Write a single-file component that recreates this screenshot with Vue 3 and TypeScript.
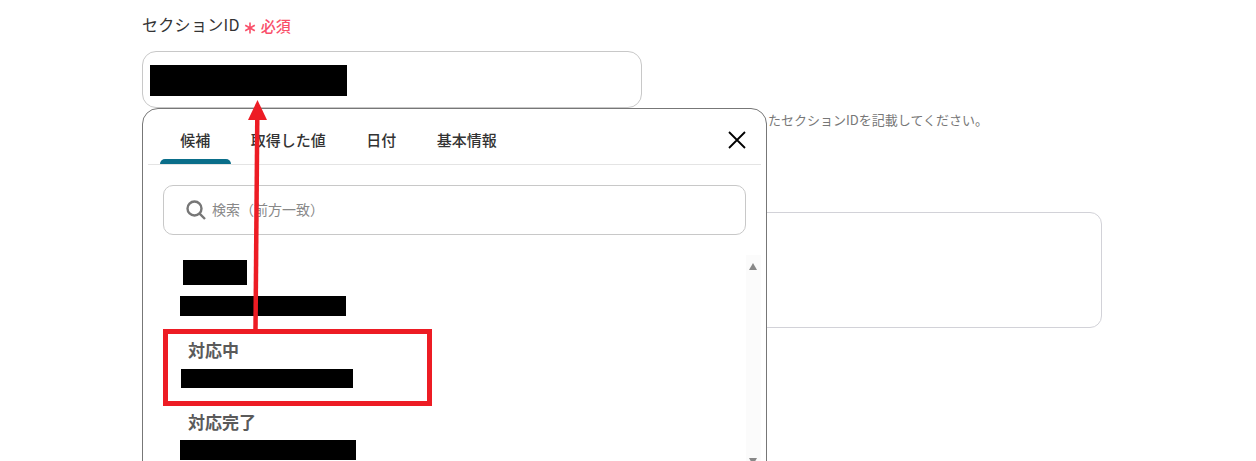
<script setup lang="ts">
const tabs = ['候補', '取得した値', '日付', '基本情報']

const items = [
  { name: '', nameWidth: 64, valueWidth: 166, valueLeft: 0, valueTop: 0, valueHeight: 20 },
  { name: '対応中', nameWidth: 0, valueWidth: 172, valueLeft: 1, valueTop: 1, valueHeight: 19 },
  { name: '対応完了', nameWidth: 0, valueWidth: 176, valueLeft: 0, valueTop: 0, valueHeight: 20 },
]
</script>

<template>
  <div class="page">
    <div class="form">
      <div class="field-label">
        <span class="field-name">セクションID</span>
        <svg class="asterisk" width="12" height="12" viewBox="0 0 12 12">
          <path d="M6 0.5V11.5M1.2 3.2L10.8 8.8M10.8 3.2L1.2 8.8" />
        </svg>
        <span class="required">必須</span>
      </div>
      <div class="input">
        <div class="redact redact--input"></div>
      </div>
      <p class="help">URLから取得したセクションIDを記載してください。</p>
      <div class="textarea"></div>
    </div>

    <div class="popup">
      <div class="tabs">
        <button
          v-for="(tab, index) in tabs"
          :key="tab"
          class="tab"
          :class="{ 'tab--active': index === 0 }"
          type="button"
        >
          {{ tab }}
        </button>
        <svg class="close" width="18" height="18" viewBox="0 0 18 18">
          <path d="M1 1L17 17M17 1L1 17" />
        </svg>
      </div>

      <div class="search">
        <svg class="search-icon" width="20" height="20" viewBox="0 0 20 20">
          <circle cx="8.5" cy="8.5" r="7" />
          <path d="M13.6 13.6L19 19" />
        </svg>
        <span class="search-text">検索（前方一致）</span>
      </div>

      <div class="list-wrap">
        <ul class="list">
          <li v-for="item in items" :key="item.valueWidth" class="item">
            <div class="item-name">
              <div v-if="item.nameWidth" class="redact redact--name" :style="{ width: item.nameWidth + 'px' }"></div>
              <span v-else class="item-text">{{ item.name }}</span>
            </div>
            <div
              class="redact"
              :style="{
                width: item.valueWidth + 'px',
                height: item.valueHeight + 'px',
                marginLeft: item.valueLeft + 'px',
                marginTop: item.valueTop + 'px',
              }"
            ></div>
          </li>
        </ul>
        <div class="scrollbar">
          <span class="arrow arrow--up"></span>
          <span class="arrow arrow--down"></span>
        </div>
      </div>
    </div>

    <div class="highlight"></div>
    <svg class="pointer" width="40" height="240" viewBox="0 0 40 240">
      <path class="pointer-line" d="M15.5 232L17.3 18" />
      <path class="pointer-head" d="M17.5 2L27 22H8Z" />
    </svg>
  </div>
</template>

<style>
body {
  background: #fff;
}
</style>

<style scoped>
.page {
  position: relative;
  height: 461px;
  overflow: hidden;
  background: #fff;
  font-family: 'Noto Sans CJK JP', 'Noto Sans', sans-serif;
  color: #333;
}

.form {
  display: flex;
  flex-direction: column;
  width: 960px;
  padding-top: 15px;
  margin-left: 142px;
}

.field-label {
  display: flex;
  align-items: center;
  height: 21px;
  font-size: 16px;
  line-height: 21px;
}

.field-name {
  margin-top: -2px;
  letter-spacing: 0.3px;
}

.asterisk {
  margin: 4px 5px 0 4px;
}

.asterisk path {
  fill: none;
  stroke: #f9506a;
  stroke-width: 1.6;
}

.required {
  font-size: 15px;
  font-weight: 500;
  color: #f9506a;
}

.input {
  box-sizing: border-box;
  width: 500px;
  height: 57px;
  margin-top: 15px;
  padding: 13px 7px;
  border: 1px solid #c8c8c8;
  border-radius: 14px;
}

.redact {
  background: #000;
}

.redact--input {
  width: 197px;
  height: 31px;
}

.help {
  width: 846px;
  margin: 2px 0 0;
  font-size: 13px;
  line-height: 20px;
  text-align: right;
  white-space: nowrap;
  color: #777;
}

.textarea {
  box-sizing: border-box;
  height: 116px;
  margin-top: 82px;
  border: 1px solid #d2d2d8;
  border-radius: 12px;
}

.popup {
  position: absolute;
  top: 108px;
  left: 142px;
  box-sizing: border-box;
  width: 625px;
  height: 420px;
  padding: 0 5px;
  background: #fff;
  border: 1px solid #777;
  border-radius: 16px;
}

.tabs {
  position: relative;
  display: flex;
  height: 55px;
  padding-left: 12px;
  border-bottom: 1px solid #e4e4e4;
}

.tab {
  position: relative;
  height: 55px;
  padding: 0 20.25px;
  background: none;
  border: none;
  font-family: inherit;
  font-size: 15px;
  font-weight: 500;
  line-height: 61px;
  color: #333;
}

.tab--active::after {
  content: '';
  position: absolute;
  right: 0;
  bottom: 0;
  left: 0;
  height: 5px;
  background: #0a6e8a;
  border-radius: 5px 5px 0 0;
}

.close {
  position: absolute;
  top: 22px;
  right: 15px;
}

.close path {
  fill: none;
  stroke: #000;
  stroke-width: 1.8;
}

.search {
  box-sizing: border-box;
  display: flex;
  align-items: center;
  gap: 6px;
  width: 583px;
  height: 50px;
  margin: 20px 0 0 15px;
  padding-left: 22px;
  border: 1px solid #c8c8c8;
  border-radius: 10px;
  font-size: 14px;
  line-height: 20px;
  color: #888;
}

.search-text {
  margin-top: -2px;
}

.search-icon {
  fill: none;
  stroke: #777;
  stroke-width: 2.4;
}

.list-wrap {
  display: flex;
  justify-content: space-between;
  height: 220px;
  margin-top: 20px;
}

.list {
  margin: 0;
  padding: 0 0 0 32px;
  list-style: none;
}

.item {
  display: flex;
  flex-direction: column;
  height: 72px;
}

.item-name {
  display: flex;
  align-items: flex-start;
  height: 41px;
  padding-left: 8px;
}

.item-text {
  margin-top: 11px;
  font-size: 17px;
  font-weight: 700;
  line-height: 24px;
  color: #5a5a5a;
}

.redact--name {
  height: 25px;
  margin: 5px 0 0 -5px;
}

.scrollbar {
  position: relative;
  width: 15px;
  background: #fbfbfb;
}

.arrow {
  position: absolute;
  left: 3px;
  width: 0;
  height: 0;
  border-right: 4.5px solid transparent;
  border-left: 4.5px solid transparent;
}

.arrow--up {
  top: 8px;
  border-bottom: 7px solid #888;
}

.arrow--down {
  top: 203px;
  border-top: 7px solid #888;
}

.highlight {
  position: absolute;
  top: 329px;
  left: 163px;
  box-sizing: border-box;
  width: 269px;
  height: 77px;
  border: 5px solid #ed1c24;
}

.pointer {
  position: absolute;
  top: 98px;
  left: 240px;
}

.pointer-line {
  fill: none;
  stroke: #ed1c24;
  stroke-width: 4.5;
}

.pointer-head {
  fill: #ed1c24;
}
</style>
